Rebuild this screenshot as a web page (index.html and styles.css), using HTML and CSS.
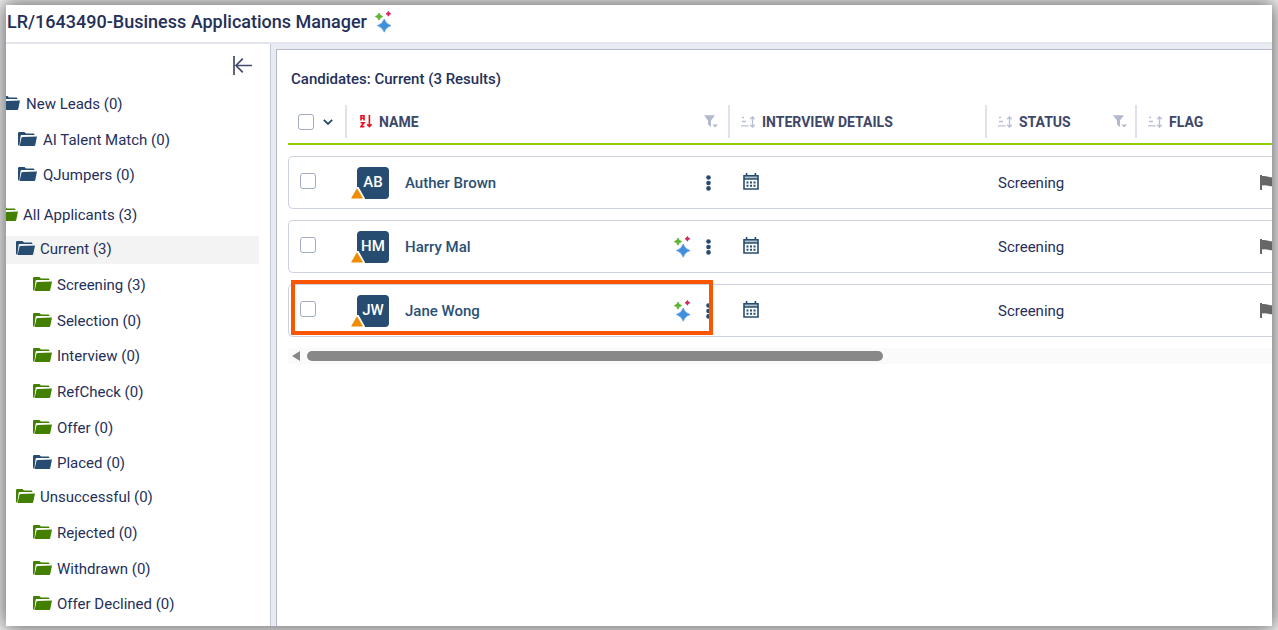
FILE: index.html
```html
<!DOCTYPE html>
<html lang="en">
<head>
    <meta charset="UTF-8">
    <title>Business Applications Manager</title>
    <link rel="stylesheet" href="styles.css">
</head>
<body>
<svg class="sprite" aria-hidden="true">
    <symbol id="folder" viewBox="0 0 19 15">
        <path fill="currentColor" d="M0 1.2Q0 0 1.2 0H6.5L8 1.4H15.2Q16.4 1.4 16.4 2.6V3H3.6Q2.8 3 2.6 3.8L1.4 13.6Q0 13.6 0 12.4Z"/>
        <path fill="currentColor" d="M4.6 5L19 4.6L17.2 13.2Q17 14 16.2 14H1.6L3.4 6Q3.7 5 4.6 5Z"/>
    </symbol>
    <symbol id="sparkles" viewBox="0 0 18 22">
        <path fill="#5cb531" d="M4 2Q4.6 5 7.6 5.6Q4.6 6.2 4 9.2Q3.4 6.2 .4 5.6Q3.4 5 4 2Z" stroke="#5cb531" stroke-width=".9"/>
        <path fill="#d81e55" d="M13.4 .4Q13.8 2.3 15.8 2.8Q13.8 3.3 13.4 5.2Q13 3.3 11 2.8Q13 2.3 13.4 .4Z" stroke="#d81e55" stroke-width=".9"/>
        <path fill="#3f8fdb" d="M9.2 8Q10.8 13 16 14.6Q10.8 16.2 9.2 21.2Q7.6 16.2 2.4 14.6Q7.6 13 9.2 8Z" stroke="#3f8fdb" stroke-width=".6"/>
    </symbol>
    <symbol id="sort" viewBox="0 0 14 12">
        <path fill="none" stroke="currentColor" stroke-width="1.3" d="M1 1.5H3M1 5.5H5M0 9.8H7.5M11.5 1V11M9.2 3.2L11.5 .8L13.8 3.2M9.2 8.8L11.5 11.2L13.8 8.8"/>
    </symbol>
    <symbol id="sort-az" viewBox="0 0 12 13">
        <path fill="none" stroke="currentColor" stroke-width="1.6" d="M1 5.5V.8H4V5.5M1 3.3H4M.6 7.8H4L1 11.6H4.4M9.4 0V11M7.2 9.2L9.4 11.6L11.6 9.2"/>
    </symbol>
    <symbol id="filter" viewBox="0 0 14 13">
        <path fill="currentColor" d="M0 .3H11L7 5.5V12L4 9.5V5.5ZM8.4 9.4H14L11.2 12.4Z"/>
    </symbol>
    <symbol id="calendar" viewBox="0 0 16 17">
        <path fill="none" stroke="currentColor" stroke-width="1.6" d="M1 2.8H15V16H1ZM1 6H15M3.6 0V3M12.4 0V3"/>
        <path fill="none" stroke="currentColor" stroke-width="2" stroke-dasharray="2 1.5" d="M3.5 9.4H12.5M3.5 12.8H12.5"/>
        <path fill="currentColor" opacity=".35" d="M1 3H15V6H1Z"/>
    </symbol>
    <symbol id="dots" viewBox="0 0 5 16">
        <g fill="currentColor">
            <circle cx="2.5" cy="2.5" r="2.3"/>
            <circle cx="2.5" cy="8" r="2.3"/>
            <circle cx="2.5" cy="13.4" r="2.3"/>
        </g>
    </symbol>
    <symbol id="warning" viewBox="0 0 14 12">
        <path fill="#fff" d="M6 0H7.6L14 11.6V12H0Z"/>
        <path fill="#f08c00" d="M6 1.2L12 11.4H0Z"/>
    </symbol>
    <symbol id="flag" viewBox="0 0 17 15">
        <path fill="#666" d="M0 0H2V1Q5 .6 8.5 1.8Q12 3 17 1.6V10.6Q12 12 8.5 10.8Q5 9.8 2 10.4V15H0Z"/>
    </symbol>
</svg>

<div class="window">
    <header class="title-bar">
        <h1>LR/1643490-Business Applications Manager</h1>
        <svg class="icon-sparkles"><use href="#sparkles"/></svg>
    </header>
    <div class="main">
        <nav class="sidebar">
            <button class="btn-collapse" aria-label="Collapse">
                <svg viewBox="0 0 19 19"><path fill="none" stroke="#424b6b" stroke-width="1.7" d="M1 0V19M3 9.5H19M9.8 2.6L3 9.5L9.8 16.4"/></svg>
            </button>
            <ul class="tree tree-leads">
                <li>
                    <a href="#"><svg class="icon-folder"><use href="#folder"/></svg>New Leads (0)</a>
                    <ul>
                        <li><a href="#"><svg class="icon-folder"><use href="#folder"/></svg>AI Talent Match (0)</a></li>
                        <li><a href="#"><svg class="icon-folder"><use href="#folder"/></svg>QJumpers (0)</a></li>
                    </ul>
                </li>
            </ul>
            <ul class="tree tree-applicants">
                <li>
                    <a href="#"><svg class="icon-folder green"><use href="#folder"/></svg>All Applicants (3)</a>
                    <ul>
                        <li>
                            <a class="selected" href="#"><svg class="icon-folder"><use href="#folder"/></svg>Current (3)</a>
                            <ul class="stages">
                                <li><a href="#"><svg class="icon-folder green"><use href="#folder"/></svg>Screening (3)</a></li>
                                <li><a href="#"><svg class="icon-folder green"><use href="#folder"/></svg>Selection (0)</a></li>
                                <li><a href="#"><svg class="icon-folder green"><use href="#folder"/></svg>Interview (0)</a></li>
                                <li><a href="#"><svg class="icon-folder green"><use href="#folder"/></svg>RefCheck (0)</a></li>
                                <li><a href="#"><svg class="icon-folder green"><use href="#folder"/></svg>Offer (0)</a></li>
                                <li><a href="#"><svg class="icon-folder"><use href="#folder"/></svg>Placed (0)</a></li>
                            </ul>
                        </li>
                        <li>
                            <a href="#"><svg class="icon-folder green"><use href="#folder"/></svg>Unsuccessful (0)</a>
                            <ul class="stages">
                                <li><a href="#"><svg class="icon-folder green"><use href="#folder"/></svg>Rejected (0)</a></li>
                                <li><a href="#"><svg class="icon-folder green"><use href="#folder"/></svg>Withdrawn (0)</a></li>
                                <li><a href="#"><svg class="icon-folder green"><use href="#folder"/></svg>Offer Declined (0)</a></li>
                            </ul>
                        </li>
                    </ul>
                </li>
            </ul>
        </nav>
        <section class="panel">
            <h2>Candidates: Current (3 Results)</h2>
            <table class="candidates">
                <colgroup>
                    <col class="col-check">
                    <col class="col-name">
                    <col class="col-interview">
                    <col class="col-status">
                    <col class="col-flag">
                </colgroup>
                <thead>
                <tr>
                    <th>
                        <div class="head head-check">
                            <input type="checkbox" aria-label="Select all">
                            <button class="btn-menu" aria-label="Selection options">
                                <svg viewBox="0 0 10 6"><path fill="none" stroke="#264d71" stroke-width="1.8" d="M.8 .8L5 5L9.2 .8"/></svg>
                            </button>
                        </div>
                    </th>
                    <th>
                        <div class="head head-name">
                            <svg class="icon-sort-az"><use href="#sort-az"/></svg>
                            <span>NAME</span>
                            <button class="btn-filter" aria-label="Filter name"><svg><use href="#filter"/></svg></button>
                        </div>
                    </th>
                    <th>
                        <div class="head">
                            <svg class="icon-sort"><use href="#sort"/></svg>
                            <span>INTERVIEW DETAILS</span>
                        </div>
                    </th>
                    <th>
                        <div class="head">
                            <svg class="icon-sort"><use href="#sort"/></svg>
                            <span>STATUS</span>
                            <button class="btn-filter" aria-label="Filter status"><svg><use href="#filter"/></svg></button>
                        </div>
                    </th>
                    <th>
                        <div class="head">
                            <svg class="icon-sort"><use href="#sort"/></svg>
                            <span>FLAG</span>
                        </div>
                    </th>
                </tr>
                </thead>
                <tbody>
                <tr>
                    <td class="cell-check"><input type="checkbox" aria-label="Select Auther Brown"></td>
                    <td>
                        <div class="person">
                            <span class="avatar">AB<svg class="warning"><use href="#warning"/></svg></span>
                            <a href="#">Auther Brown</a>
                            <button class="btn-more" aria-label="More"><svg><use href="#dots"/></svg></button>
                        </div>
                    </td>
                    <td><button class="btn-calendar" aria-label="Interviews"><svg><use href="#calendar"/></svg></button></td>
                    <td class="cell-status">Screening</td>
                    <td class="cell-flag"><svg><use href="#flag"/></svg></td>
                </tr>
                <tr>
                    <td class="cell-check"><input type="checkbox" aria-label="Select Harry Mal"></td>
                    <td>
                        <div class="person">
                            <span class="avatar">HM<svg class="warning"><use href="#warning"/></svg></span>
                            <a href="#">Harry Mal</a>
                            <svg class="icon-sparkles"><use href="#sparkles"/></svg>
                            <button class="btn-more" aria-label="More"><svg><use href="#dots"/></svg></button>
                        </div>
                    </td>
                    <td><button class="btn-calendar" aria-label="Interviews"><svg><use href="#calendar"/></svg></button></td>
                    <td class="cell-status">Screening</td>
                    <td class="cell-flag"><svg><use href="#flag"/></svg></td>
                </tr>
                <tr>
                    <td class="cell-check"><input type="checkbox" aria-label="Select Jane Wong"><span class="marker"></span></td>
                    <td>
                        <div class="person">
                            <span class="avatar">JW<svg class="warning"><use href="#warning"/></svg></span>
                            <a href="#">Jane Wong</a>
                            <svg class="icon-sparkles"><use href="#sparkles"/></svg>
                            <button class="btn-more" aria-label="More"><svg><use href="#dots"/></svg></button>
                        </div>
                    </td>
                    <td><button class="btn-calendar" aria-label="Interviews"><svg><use href="#calendar"/></svg></button></td>
                    <td class="cell-status">Screening</td>
                    <td class="cell-flag"><svg><use href="#flag"/></svg></td>
                </tr>
                </tbody>
            </table>
            <div class="scrollbar">
                <svg viewBox="0 0 8 10"><path fill="#888" d="M8 0V10L0 5Z"/></svg>
                <div class="scroll-thumb"></div>
            </div>
        </section>
    </div>
</div>
</body>
</html>
```
FILE: styles.css
```css
* {
    margin: 0;
    padding: 0;
    box-sizing: border-box;
}

body {
    height: 100vh;
    padding: 5px 6px 4px;
    overflow: hidden;
    background-color: #fff;
    font: 15px/20px Roboto, "Liberation Sans", sans-serif;
    color: #24305a;
}

ul {
    list-style: none;
}

a {
    color: inherit;
    text-decoration: none;
}

button {
    border: none;
    background: none;
    cursor: pointer;
}

svg {
    display: block;
    flex-shrink: 0;
}

.sprite {
    display: none;
}

.window {
    height: 100%;
    display: flex;
    flex-direction: column;
    overflow: hidden;
    background-color: #fff;
    box-shadow: 0 0 20px 4px rgba(0, 0, 0, 0.58);
}

.title-bar {
    height: 39px;
    padding: 0 1px 4px;
    display: flex;
    align-items: center;
    gap: 8px;
    flex-shrink: 0;
    border-bottom: 2px solid #e2e5ee;
}

.title-bar h1 {
    font-size: 18px;
    font-weight: 500;
}

.icon-sparkles {
    width: 18px;
    height: 22px;
}

.main {
    flex: 1;
    min-height: 0;
    display: flex;
    background-color: #e8ebf2;
}

/* sidebar */
.sidebar {
    width: 265px;
    padding: 12px 11px 0 0;
    flex-shrink: 0;
    overflow: hidden;
    background-color: #fff;
    border-right: 1px solid #c6cbdc;
}

.btn-collapse {
    display: block;
    margin: 0 7px 16px auto;
}

.btn-collapse svg {
    width: 19px;
    height: 19px;
}

.tree a {
    height: 28px;
    padding-bottom: 3px;
    display: flex;
    align-items: center;
    gap: 5px;
}

.tree ul a {
    padding-left: 17px;
}

.tree ul ul a {
    padding-left: 34px;
}

.tree-leads {
    margin-left: -5px;
}

.tree-leads a {
    margin-bottom: 7px;
    gap: 6px;
}

.tree-leads > li > a {
    margin-bottom: 8px;
}

.tree-applicants {
    margin: 12px 0 0 -7px;
}

.tree-applicants > li > a {
    margin-bottom: 6px;
}

.tree .selected {
    background-color: #f3f3f3;
}

.stages {
    padding: 8px 0 6px;
}

.stages li + li {
    margin-top: 8px;
}

.stages li:nth-child(3n) {
    margin-top: 7px;
}

.icon-folder {
    width: 19px;
    height: 15px;
    color: #264d71;
}

.green {
    color: #448000;
}

/* candidates */
.panel {
    flex: 1;
    min-width: 0;
    margin: 5px 0 0 5px;
    padding: 19px 0 0 11px;
    overflow: hidden;
    background-color: #fff;
    border: solid #b4b9cc;
    border-width: 1px 0 0 1px;
}

.panel h2 {
    margin: 0 3px 5px;
    font-size: 15px;
    font-weight: 500;
}

.candidates {
    width: 1113px;
    table-layout: fixed;
    border-collapse: separate;
    border-spacing: 0 11px;
}

.col-check {
    width: 57px;
}

.col-name {
    width: 383px;
}

.col-interview {
    width: 257px;
}

.col-status {
    width: 150px;
}

.col-flag {
    width: 266px;
}

.candidates th {
    padding-bottom: 5px;
    border-bottom: 2px solid #94cf00;
    font-size: 14px;
    font-weight: 700;
    color: #3e4768;
}

.head {
    height: 33px;
    padding: 0 8px 0 11px;
    display: flex;
    align-items: center;
    gap: 7px;
    border-left: 2px solid #dfe2ea;
}

.head-check {
    padding: 0 0 0 10px;
    gap: 9px;
    border-left: none;
}

.head-name {
    padding: 0 10px 0 13px;
}

input[type="checkbox"] {
    width: 16px;
    height: 16px;
    display: block;
    appearance: none;
    background-color: #fff;
    border: 1px solid #a3abc4;
    border-radius: 3px;
}

.btn-menu svg {
    width: 10px;
    height: 6px;
}

.icon-sort-az {
    width: 12px;
    height: 13px;
    color: #e8101f;
}

.icon-sort {
    width: 14px;
    height: 12px;
    color: #b9bfd3;
}

.btn-filter {
    margin-left: auto;
    color: #b2b8ce;
}

.btn-filter svg {
    width: 14px;
    height: 13px;
}

.candidates td {
    height: 53px;
    border: solid #cdd2e0;
    border-width: 1px 0;
}

.candidates td:first-child {
    border-left-width: 1px;
    border-radius: 5px 0 0 5px;
}

.cell-check {
    position: relative;
    padding: 0 0 3px 11px;
}

.person {
    padding: 0 17px 0 12px;
    display: flex;
    align-items: center;
    font-weight: 500;
    color: #2b5075;
}

.person a {
    margin: 0 auto 0 16px;
}

.avatar {
    position: relative;
    width: 32px;
    height: 32px;
    background-color: #264d71;
    border-radius: 4px;
    line-height: 31px;
    text-align: center;
    color: #fff;
}

.warning {
    position: absolute;
    left: -6px;
    bottom: 0;
    width: 14px;
    height: 12px;
}

.btn-more {
    margin-left: 14px;
    color: #264d71;
}

.btn-more svg {
    width: 5px;
    height: 16px;
}

.btn-calendar {
    margin: 0 0 3px 15px;
    display: block;
    color: #264d71;
}

.btn-calendar svg {
    width: 16px;
    height: 17px;
}

.cell-status {
    padding-left: 13px;
}

.cell-flag svg {
    width: 17px;
    height: 15px;
    margin: 0 auto;
}

/* frame over the picked row */
.marker {
    position: absolute;
    left: 2px;
    top: -5px;
    width: 422px;
    height: 55px;
    border: 4px solid #fa5500;
}

.scrollbar {
    height: 16px;
    padding: 0 4px;
    display: flex;
    align-items: center;
    gap: 7px;
    background-color: #fafafa;
}

.scrollbar svg {
    width: 8px;
    height: 10px;
}

.scroll-thumb {
    width: 59%;
    height: 10px;
    background-color: #888;
    border-radius: 5px;
}
```
